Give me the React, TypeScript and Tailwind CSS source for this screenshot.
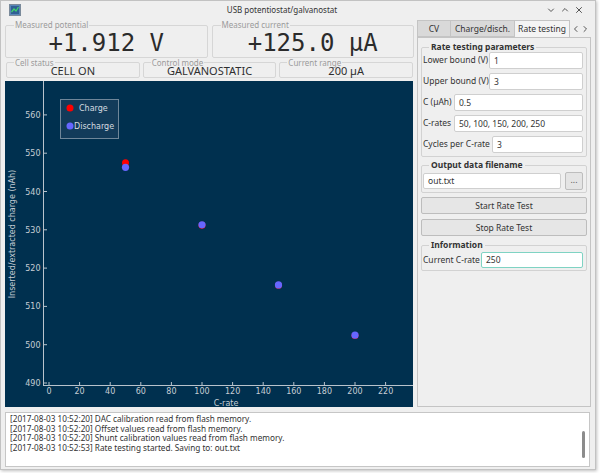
import React from 'react';

const sans = "font-['Noto_Sans','DejaVu_Sans',sans-serif]";
const mono = "font-['DejaVu_Sans_Mono','Liberation_Mono',monospace]";

const xPx = (v: number) => 44 + v * 1.53;
const yPx = (v: number) => 302 - (v - 490) * 3.83;

const yTicks = [490, 500, 510, 520, 530, 540, 550, 560];
const xTicks = [0, 20, 40, 60, 80, 100, 120, 140, 160, 180, 200, 220];

const charge = [
  [50, 547.5],
  [100, 531.2],
  [150, 515.5],
  [200, 502.4],
];
const discharge = [
  [50, 546.3],
  [100, 531.3],
  [150, 515.6],
  [200, 502.5],
];

const logLines = [
  '[2017-08-03 10:52:20] DAC calibration read from flash memory.',
  '[2017-08-03 10:52:20] Offset values read from flash memory.',
  '[2017-08-03 10:52:20] Shunt calibration values read from flash memory.',
  '[2017-08-03 10:52:53] Rate testing started. Saving to: out.txt',
];

const Reading: React.FC<{ label: string; value: string }> = ({ label, value }) => (
  <fieldset className="flex-1 min-w-0 h-[38px] border border-[#d6d6d6] rounded-[2px] px-[6px]">
    <legend className="ml-[2px] px-[1px] text-[8px] leading-[10px] text-[#9b9b9b]">{label}</legend>
    <div className={`${mono} text-center text-[24px] leading-[26px] text-[#2b2b2b]`}>{value}</div>
  </fieldset>
);

const Status: React.FC<{ label: string; value: string }> = ({ label, value }) => (
  <fieldset className="flex-1 min-w-0 h-[20px] border border-[#d6d6d6] rounded-[2px] px-[6px]">
    <legend className="ml-[1px] px-[1px] text-[8px] leading-[9px] text-[#9b9b9b]">{label}</legend>
    <div className="-mt-[2px] text-center text-[11px] leading-[12px] text-[#2f2f2f]">{value}</div>
  </fieldset>
);

const Field: React.FC<{ label: string; value: string; labelW: string }> = ({ label, value, labelW }) => (
  <div className="flex items-center h-[17px]">
    <span className={`${labelW} shrink-0 whitespace-nowrap`}>{label}</span>
    <div className="flex-1 h-[17px] mr-[2px] bg-white border border-[#cfcfcf] rounded-[2px] pl-[4px] leading-[15px]">
      {value}
    </div>
  </div>
);

const Chart: React.FC = () => (
  <svg width="408" height="326" viewBox="0 0 408 326" className="block">
    <rect x="0" y="0" width="408" height="326" fill="#00304f" />
    {/* axes */}
    <line x1="38.5" y1="0" x2="38.5" y2="304.5" stroke="#b9c3cc" strokeWidth="1" />
    <line x1="38" y1="304.5" x2="408" y2="304.5" stroke="#b9c3cc" strokeWidth="1" />
    {yTicks.map((t) => (
      <g key={t}>
        <line x1="38.5" y1={yPx(t)} x2="42" y2={yPx(t)} stroke="#b9c3cc" />
        <text x="35.5" y={yPx(t) + 3} textAnchor="end" fontSize="8" fill="#c6cdd4" fontFamily="DejaVu Sans, sans-serif">
          {t}
        </text>
      </g>
    ))}
    {xTicks.map((t) => (
      <g key={t}>
        <line x1={xPx(t)} y1="301" x2={xPx(t)} y2="304.5" stroke="#b9c3cc" />
        <text x={xPx(t)} y="312.5" textAnchor="middle" fontSize="8" fill="#c6cdd4" fontFamily="DejaVu Sans, sans-serif">
          {t}
        </text>
      </g>
    ))}
    <text x="221" y="325" textAnchor="middle" fontSize="8" fill="#c6cdd4" fontFamily="DejaVu Sans, sans-serif">
      C-rate
    </text>
    <text
      x="0"
      y="0"
      transform="translate(9.5 153) rotate(-90)"
      textAnchor="middle"
      fontSize="8"
      fill="#c6cdd4"
      fontFamily="DejaVu Sans, sans-serif"
    >
      Inserted/extracted charge (nAh)
    </text>

    {/* legend */}
    <rect x="55.5" y="18.5" width="58" height="39" fill="#173f5c" fillOpacity="0.8" stroke="#6f8699" />
    <circle cx="65" cy="27" r="3.5" fill="#ff0000" />
    <text x="74" y="30" fontSize="8" fill="#d5dbe0" fontFamily="DejaVu Sans, sans-serif">
      Charge
    </text>
    <circle cx="65" cy="45" r="3.5" fill="#6666ff" />
    <text x="69" y="48" fontSize="8" fill="#d5dbe0" fontFamily="DejaVu Sans, sans-serif">
      Discharge
    </text>

    {/* data */}
    {charge.map(([x, y]) => (
      <circle key={`c${x}`} cx={xPx(x)} cy={yPx(y)} r="3.5" fill="#ff0000" />
    ))}
    {discharge.map(([x, y]) => (
      <circle key={`d${x}`} cx={xPx(x)} cy={yPx(y)} r="3.6" fill="#6666ff" />
    ))}
  </svg>
);

const Chevron: React.FC<{ d: string }> = ({ d }) => (
  <svg width="8" height="8" viewBox="0 0 8 8">
    <path d={d} fill="none" stroke="#555" strokeWidth="1" strokeLinecap="round" strokeLinejoin="round" />
  </svg>
);

export default function App() {
  return (
    <div className={`${sans} w-[600px] h-[473px] bg-white overflow-hidden`}>
      <div className="w-[596px] h-[470px] bg-[#efefef] border border-[#c2c2c2] shadow-[1px_1px_3px_rgba(0,0,0,0.25)] flex flex-col">
        {/* Title bar */}
        <div className="relative h-[18px] flex items-center shrink-0">
          <svg width="12" height="12" viewBox="0 0 12 12" className="ml-[8px]">
            <rect x="0.5" y="0.5" width="11" height="11" fill="#5a86b8" stroke="#7a8a9a" />
            <rect x="2" y="2" width="8" height="8" fill="#2f5f94" />
            <path d="M2.5 8 L5 5 L7 7 L9.5 3" stroke="#3fd36b" strokeWidth="1.2" fill="none" />
          </svg>
          <div className="flex-1 text-center text-[8px] leading-[10px] text-[#333] -ml-[4px]">USB potentiostat/galvanostat</div>
          <div className="flex items-center gap-[6px] mr-[12px]">
            <Chevron d="M1.5 3 L4 5.5 L6.5 3" />
            <Chevron d="M1.5 5 L4 2.5 L6.5 5" />
            <Chevron d="M1.5 1.5 L6.5 6.5 M6.5 1.5 L1.5 6.5" />
          </div>
        </div>

        {/* Body */}
        <div className="px-[4px] flex flex-col">
          <div className="flex h-[389px]">
            {/* Left column */}
            <div className="w-[409px] flex flex-col">
              <div className="flex gap-[4px] mt-[1px]">
                <Reading label="Measured potential" value="+1.912 V" />
                <Reading label="Measured current" value="+125.0 µA" />
              </div>
              <div className="flex gap-[3px] px-[1px]">
                <Status label="Cell status" value="CELL ON" />
                <Status label="Control mode" value="GALVANOSTATIC" />
                <Status label="Current range" value="200 µA" />
              </div>
              <div className="mt-[3px] h-[326px]">
                <Chart />
              </div>
            </div>

            {/* Right column */}
            <div className="w-[174px] ml-[3px] flex flex-col text-[8.5px] text-[#333]">
              <div className="flex h-[17px] mt-[1px] leading-[15px]">
                <div className="w-[34px] bg-[#d9d9d9] border border-[#c4c4c4] text-center">CV</div>
                <div className="w-[64px] bg-[#d9d9d9] border border-l-0 border-[#c4c4c4] text-center">Charge/disch.</div>
                <div className="w-[55px] bg-[#f4f4f4] border border-l-0 border-b-0 border-[#c4c4c4] text-center">Rate testing</div>
                <div className="flex-1 flex items-center justify-center gap-[1px]">
                  <Chevron d="M5 1.5 L2.5 4 L5 6.5" />
                  <Chevron d="M3 1.5 L5.5 4 L3 6.5" />
                </div>
              </div>
              <div className="h-[370px] border border-[#c4c4c4] px-[3px] pt-[4px] flex flex-col">
                <fieldset className="border border-[#d2d2d2] rounded-[2px] px-[1px] pb-[3px]">
                  <legend className="ml-[6px] px-[2px] font-bold leading-[10px] text-[#333]">Rate testing parameters</legend>
                  <div className="flex flex-col gap-[4px]">
                    <Field label="Lower bound (V)" value="1" labelW="w-[66px]" />
                    <Field label="Upper bound (V)" value="3" labelW="w-[66px]" />
                    <Field label="C (µAh)" value="0.5" labelW="w-[31px]" />
                    <Field label="C-rates" value="50, 100, 150, 200, 250" labelW="w-[31px]" />
                    <Field label="Cycles per C-rate" value="3" labelW="w-[69px]" />
                  </div>
                </fieldset>

                <fieldset className="mt-[3px] border border-[#d2d2d2] rounded-[2px] px-[1px] pb-[2px]">
                  <legend className="ml-[6px] px-[2px] font-bold leading-[10px] text-[#333]">Output data filename</legend>
                  <div className="flex items-center h-[18px] mt-[2px]">
                    <div className="flex-1 h-[16px] bg-white border border-[#cfcfcf] rounded-[2px] pl-[4px] leading-[14px]">out.txt</div>
                    <div className="w-[18px] h-[18px] ml-[4px] mr-[2px] bg-[#e4e4e4] border border-[#bdbdbd] rounded-[2px] text-center leading-[14px] text-[#555]">
                      ...
                    </div>
                  </div>
                </fieldset>

                <div className="mt-[4px] h-[17px] bg-[#e6e6e6] border border-[#bdbdbd] rounded-[2px] text-center leading-[15px]">
                  Start Rate Test
                </div>
                <div className="mt-[5px] h-[17px] bg-[#e6e6e6] border border-[#bdbdbd] rounded-[2px] text-center leading-[15px]">
                  Stop Rate Test
                </div>

                <fieldset className="mt-[4px] border border-[#d2d2d2] rounded-[2px] px-[1px] pb-[2px]">
                  <legend className="ml-[6px] px-[2px] font-bold leading-[10px] text-[#333]">Information</legend>
                  <div className="flex items-center h-[16px] mt-[2px]">
                    <span className="w-[58px] shrink-0 whitespace-nowrap">Current C-rate</span>
                    <div className="flex-1 h-[16px] mr-[2px] bg-white border border-[#7fd3c3] rounded-[2px] pl-[4px] leading-[14px]">250</div>
                  </div>
                </fieldset>
              </div>
            </div>
          </div>

          {/* Log */}
          <div className="mt-[4px] h-[55px] w-[585px] bg-white border border-[#c6c6c6] flex">
            <div className="flex-1 pl-[4px] pt-[1px] text-[8.2px] leading-[9.7px] text-[#333] whitespace-nowrap">
              {logLines.map((l) => (
                <div key={l}>{l}</div>
              ))}
            </div>
            <div className="w-[3px] mr-[4px] pt-[18px]">
              <div className="h-[27px] w-[3px] rounded-full bg-[#8c8c8c]" />
            </div>
          </div>
        </div>
      </div>
    </div>
  );
}
